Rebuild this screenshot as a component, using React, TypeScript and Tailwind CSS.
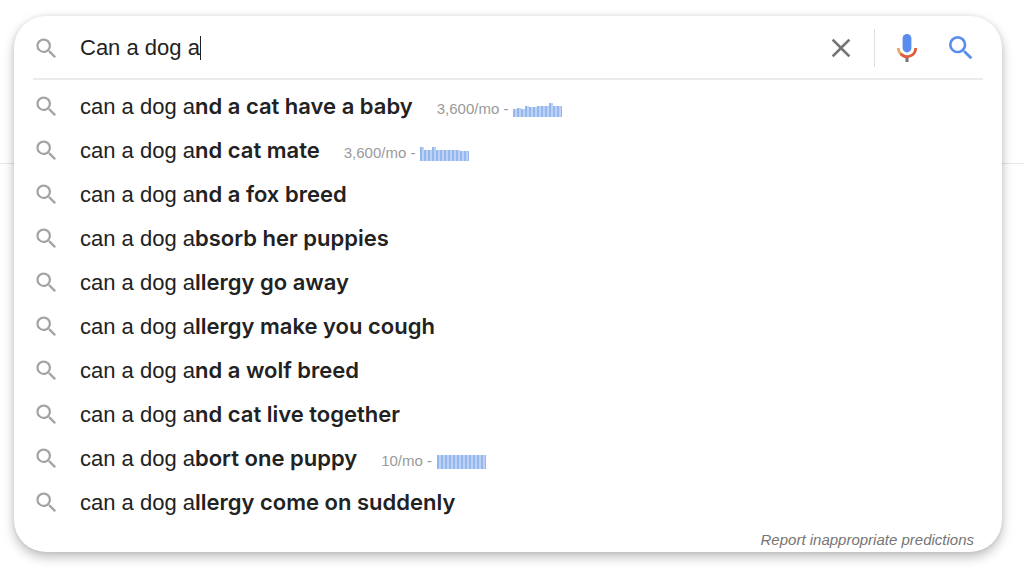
import React, { useState } from 'react';
import { MdClose, MdSearch } from 'react-icons/md';

type Suggestion = {
  rest: string;
  volume?: string;
  trend?: number[];
};

const PREFIX = 'can a dog a';

const suggestions: Suggestion[] = [
  { rest: 'nd a cat have a baby', volume: '3,600/mo', trend: [8, 9, 8, 11, 10, 10, 11, 11, 11, 14, 11, 11] },
  { rest: 'nd cat mate', volume: '3,600/mo', trend: [14, 11, 11, 14, 11, 11, 11, 11, 11, 11, 10, 10] },
  { rest: 'nd a fox breed' },
  { rest: 'bsorb her puppies' },
  { rest: 'llergy go away' },
  { rest: 'llergy make you cough' },
  { rest: 'nd a wolf breed' },
  { rest: 'nd cat live together' },
  { rest: 'bort one puppy', volume: '10/mo', trend: [14, 14, 14, 14, 14, 14, 14, 14, 14, 14, 14, 14] },
  { rest: 'llergy come on suddenly' },
];

const MicIcon = () => (
  <svg viewBox="0 0 24 32" className="w-6 h-8" aria-hidden="true">
    <path d="M12 24v6" stroke="#757575" strokeWidth="3" />
    <path d="M3.3 16a8.7 8.7 0 0 0 2.8 6.2" fill="none" stroke="#eda96b" strokeWidth="2.8" />
    <path d="M5.6 21.8A8.7 8.7 0 0 0 20.7 16" fill="none" stroke="#de5f40" strokeWidth="2.8" />
    <rect x="7.6" y="2" width="8.8" height="18.4" rx="4.4" fill="#5a8cf0" />
  </svg>
);

const Trend = ({ values }: { values: number[] }) => (
  <svg viewBox="0 0 49 14" className="mt-px w-[49px] h-[14px]" aria-hidden="true">
    {values.map((v, i) => (
      <g key={i}>
        <rect x={i * 4} y={14 - v} width="4" height={v} fill="#bdd2f5" />
        <rect x={i * 4} y={14 - v} width="2" height={v} fill="#94b7ee" />
      </g>
    ))}
    <rect x="48" y={14 - values[values.length - 1]} width="1" height={values[values.length - 1]} fill="#94b7ee" />
  </svg>
);

const App = () => {
  const [query, setQuery] = useState('Can a dog a');

  return (
    <div className="relative min-h-screen bg-white pt-4 pr-[22px] pb-6 pl-[14px] font-['Liberation_Sans',Arial,sans-serif] text-[#222]">
      <div className="absolute inset-x-0 top-0 h-[164px] border-b border-[#e8e8e8]" />

      <form
        onSubmit={(e) => e.preventDefault()}
        className="relative rounded-[32px] bg-white shadow-[0_5px_12px_rgba(0,0,0,0.26),0_0_4px_rgba(0,0,0,0.08)]"
      >
        <div className="mx-[19px] flex h-16 items-center border-b-2 border-[#ebebeb] pt-0.5">
          <MdSearch className="size-[27px] text-[#a3a3a3]" />
          <div className="ml-5 flex flex-1 items-center">
            <input
              type="text"
              aria-label="Search"
              value={query}
              onChange={(e) => setQuery(e.target.value)}
              className="field-sizing-content text-[22px] leading-7 caret-transparent outline-none"
            />
            <span className="h-6 w-px bg-[#222]" />
          </div>
          <button type="button" aria-label="Clear" onClick={() => setQuery('')}>
            <MdClose className="size-8 text-[#757575]" />
          </button>
          <span className="ml-[17px] h-[38px] w-px bg-[#dedede]" />
          <button type="button" aria-label="Search by voice" className="ml-5">
            <MicIcon />
          </button>
          <button type="submit" aria-label="Search" className="mr-[6px] ml-[26px]">
            <MdSearch className="size-8 text-[#5a8cf0]" />
          </button>
        </div>

        <ul className="px-[19px] pt-1">
          {suggestions.map((s) => (
            <li key={s.rest} className="flex h-11 items-center">
              <MdSearch className="size-[27px] text-[#a3a3a3]" />
              <span className="ml-5 text-[22px] leading-7 whitespace-pre">
                {PREFIX}
                <b className="font-['Inter',sans-serif] font-semibold">{s.rest}</b>
              </span>
              {s.trend && (
                <span className="ml-6 flex items-center gap-[5px] pt-1.5 text-[15px] text-[#9a9a9a]">
                  {s.volume} -
                  <Trend values={s.trend} />
                </span>
              )}
            </li>
          ))}
        </ul>

        <div className="flex justify-end pt-1 pr-7">
          <a href="#" className="text-[15px] leading-6 text-[#757575] italic">
            Report inappropriate predictions
          </a>
        </div>
      </form>
    </div>
  );
};

export default App;
